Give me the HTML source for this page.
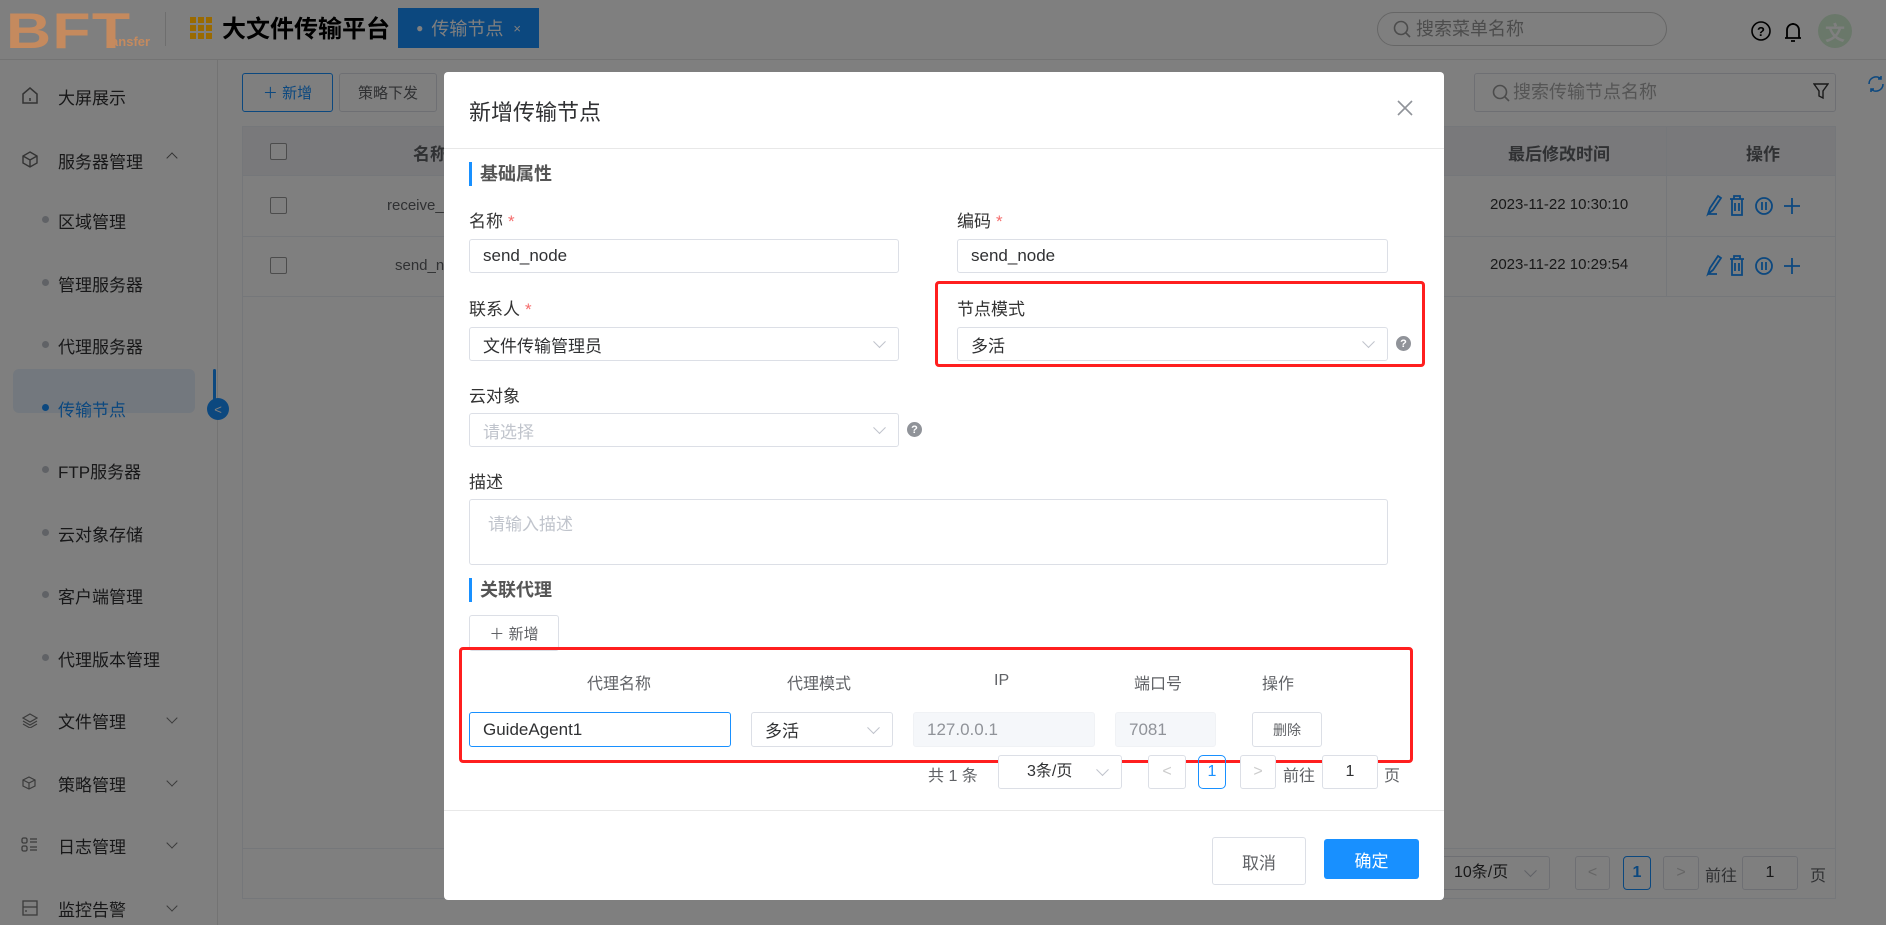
<!DOCTYPE html>
<html><head><meta charset="utf-8">
<style>
*{box-sizing:border-box;margin:0;padding:0}
html{width:1886px;height:925px;overflow:hidden}
body{width:1886px;height:925px;overflow:hidden;position:relative;background:#fff;font-family:"Liberation Sans","Noto Sans CJK SC",sans-serif;color:#303133}
.a{position:absolute;white-space:nowrap}
.c{display:flex;align-items:center;justify-content:center}
.side{font-size:17px;color:#303133}
.dot{width:7px;height:7px;border-radius:50%;background:#c0c4cc}
.btn{border:1px solid #dcdfe6;border-radius:3px;background:#fff}
.inp{border:1px solid #dcdfe6;border-radius:3px;background:#fff;font-size:17px;padding-left:13px;display:flex;align-items:center}
.lbl{font-size:17px;color:#333}
.star{color:#f56c6c;margin-left:5px}
.chev{position:absolute;right:14px;top:50%;width:9px;height:9px;border-right:1px solid #c0c4cc;border-bottom:1px solid #c0c4cc;transform:translateY(-75%) rotate(45deg)}
.help{width:15px;height:15px;border-radius:50%;background:#909399;color:#fff;font-size:11px;font-weight:bold}
.sec{border-left:3px solid #1890ff;padding-left:8px;font-size:18px;font-weight:bold;color:#555;height:24px;line-height:24px}
.th{font-size:16px;color:#606266}
</style></head><body>
<!-- header -->
<div class="a" style="left:0;top:0;width:1886px;height:60px;border-bottom:1px solid #e6e6e6;background:#fff"></div>
<div class="a" style="left:165px;top:12px;width:1px;height:34px;background:#ddd"></div>
<div class="a" style="left:222px;top:12px;font-size:24px;font-weight:bold;color:#000;line-height:36px">大文件传输平台</div>
<div class="a c" style="left:398px;top:8px;width:141px;height:40px;background:#1890ff;color:#fff;font-size:18px"><span style="font-size:12px;margin-right:8px">●</span>传输节点<span style="font-size:13px;margin-left:10px">×</span></div>
<div class="a" style="left:1377px;top:12px;width:290px;height:34px;border:1px solid #ccc;border-radius:17px;font-size:18px;color:#999;padding-left:38px;line-height:32px">搜索菜单名称</div>
<svg class="a" style="left:1393px;top:20px" width="18" height="18"><circle cx="8" cy="8" r="6.5" fill="none" stroke="#999" stroke-width="1.6"/><path d="M13 13l4 4" stroke="#999" stroke-width="1.6"/></svg>
<svg class="a" style="left:1751px;top:21px" width="20" height="20"><circle cx="10" cy="10" r="9" fill="none" stroke="#000" stroke-width="1.6"/><text x="10" y="15" font-size="13" text-anchor="middle" font-family="Liberation Sans" font-weight="bold">?</text></svg>
<svg class="a" style="left:1783px;top:20px" width="20" height="24"><path d="M4 18V10a6 6 0 0 1 12 0v8M2 18h16M10 3v1M8 21h4" fill="none" stroke="#000" stroke-width="1.8"/></svg>
<div class="a c" style="left:1818px;top:14px;width:34px;height:34px;border-radius:50%;background:#d4f0d4;color:#fff;font-size:20px;font-weight:bold">文</div>
<!-- sidebar -->
<div class="a" style="left:217px;top:60px;width:1px;height:865px;background:#e6e6e6"></div>
<div class="a side" style="left:0;top:0;width:217px;height:925px">
<svg class="a" style="left:20px;top:85px" width="20" height="20"><path d="M3 9l7-6 7 6v9H3z" fill="none" stroke="#666" stroke-width="1.5"/><path d="M10 13v3" stroke="#666" stroke-width="1.5"/></svg>
<div class="a" style="left:58px;top:84px">大屏展示</div>
<svg class="a" style="left:21px;top:150px" width="18" height="18"><path d="M9 2l7 4v7l-7 4-7-4V6zM2 6l7 4 7-4M9 10v7" fill="none" stroke="#666" stroke-width="1.4"/></svg>
<div class="a" style="left:58px;top:148px">服务器管理</div>
<div class="a" style="left:168px;top:154px;width:8px;height:8px;border-left:1px solid #666;border-top:1px solid #666;transform:rotate(45deg)"></div>
<div class="a" style="left:13px;top:369px;width:182px;height:44px;background:#e6f1fc;border-radius:6px"></div>
<div class="a" style="left:213px;top:369px;width:3px;height:32px;background:#1890ff;border-radius:2px"></div>
<div class="a c" style="left:207px;top:398px;width:22px;height:22px;border-radius:50%;background:#1890ff;color:#fff;font-size:13px">&lt;</div>
<div class="a dot" style="left:42px;top:216px"></div><div class="a" style="left:58px;top:208px">区域管理</div>
<div class="a dot" style="left:42px;top:279px"></div><div class="a" style="left:58px;top:271px">管理服务器</div>
<div class="a dot" style="left:42px;top:341px"></div><div class="a" style="left:58px;top:333px">代理服务器</div>
<div class="a dot" style="left:42px;top:404px;background:#1890ff"></div><div class="a" style="left:58px;top:396px;color:#1890ff">传输节点</div>
<div class="a dot" style="left:42px;top:466px"></div><div class="a" style="left:58px;top:458px">FTP服务器</div>
<div class="a dot" style="left:42px;top:529px"></div><div class="a" style="left:58px;top:521px">云对象存储</div>
<div class="a dot" style="left:42px;top:591px"></div><div class="a" style="left:58px;top:583px">客户端管理</div>
<div class="a dot" style="left:42px;top:654px"></div><div class="a" style="left:58px;top:646px">代理版本管理</div>
<div class="a" style="left:58px;top:708px">文件管理</div>
<div class="a" style="left:58px;top:771px">策略管理</div>
<div class="a" style="left:58px;top:833px">日志管理</div>
<div class="a" style="left:58px;top:896px">监控告警</div>
<svg class="a" style="left:22px;top:712px" width="16" height="16"><path d="M8 2l7 4-7 4-7-4zM1 9l7 4 7-4M1 12l7 4 7-4" fill="none" stroke="#777" stroke-width="1.2"/></svg>
<svg class="a" style="left:22px;top:775px" width="16" height="16"><path d="M7 2l6 3v6l-6 3-6-3V5zM1 5l6 3 6-3M7 8v6" fill="none" stroke="#777" stroke-width="1.2"/></svg>
<svg class="a" style="left:21px;top:837px" width="18" height="16"><rect x="1" y="1" width="5" height="5" rx="1.5" fill="none" stroke="#777" stroke-width="1.3"/><rect x="1" y="9" width="5" height="5" rx="1.5" fill="none" stroke="#777" stroke-width="1.3"/><path d="M9 2h7M9 5h7M9 10h7M9 13h7" stroke="#777" stroke-width="1.3"/></svg>
<svg class="a" style="left:22px;top:900px" width="16" height="16"><rect x="1" y="1" width="14" height="14" fill="none" stroke="#777" stroke-width="1.3"/><path d="M1 7h14M4 10v2" stroke="#777" stroke-width="1.3"/></svg>
<div class="a" style="left:168px;top:714px;width:8px;height:8px;border-right:1px solid #777;border-bottom:1px solid #777;transform:rotate(45deg)"></div>
<div class="a" style="left:168px;top:777px;width:8px;height:8px;border-right:1px solid #777;border-bottom:1px solid #777;transform:rotate(45deg)"></div>
<div class="a" style="left:168px;top:839px;width:8px;height:8px;border-right:1px solid #777;border-bottom:1px solid #777;transform:rotate(45deg)"></div>
<div class="a" style="left:168px;top:902px;width:8px;height:8px;border-right:1px solid #777;border-bottom:1px solid #777;transform:rotate(45deg)"></div>
</div>
<!-- content -->
<div class="a c" style="left:242px;top:73px;width:91px;height:39px;border:1px solid #1890ff;border-radius:3px;color:#1890ff;font-size:15px">＋ 新增</div>
<div class="a c btn" style="left:339px;top:73px;width:98px;height:39px;font-size:15px;color:#606266">策略下发</div>
<div class="a" style="left:1474px;top:73px;width:362px;height:39px;border:1px solid #dcdfe6;border-radius:3px;font-size:18px;color:#aaa;padding-left:38px;line-height:37px">搜索传输节点名称</div>
<svg class="a" style="left:1492px;top:84px" width="18" height="18"><circle cx="8" cy="8" r="6.5" fill="none" stroke="#999" stroke-width="1.6"/><path d="M13 13l4 4" stroke="#999" stroke-width="1.6"/></svg>
<svg class="a" style="left:1813px;top:82px" width="16" height="18"><path d="M1 2h14l-5 7v7l-4-2V9z" fill="none" stroke="#333" stroke-width="1.4"/></svg>
<svg class="a" style="left:1866px;top:74px" width="20" height="20"><path d="M3 10a7 7 0 0 1 12-5M17 10a7 7 0 0 1-12 5M15 2v3h-3M5 18v-3h3" fill="none" stroke="#1890ff" stroke-width="1.6"/></svg>
<div class="a" style="left:242px;top:126px;width:1594px;height:773px;border:1px solid #ebeef5"></div>
<div class="a" style="left:243px;top:127px;width:1592px;height:49px;background:#f2f3f7;border-bottom:1px solid #ebeef5"></div>
<div class="a" style="left:1666px;top:127px;width:1px;height:170px;background:#ebeef5"></div>
<div class="a" style="left:243px;top:236px;width:1592px;height:1px;background:#ebeef5"></div>
<div class="a" style="left:243px;top:296px;width:1592px;height:1px;background:#ebeef5"></div>
<div class="a" style="left:243px;top:848px;width:1592px;height:1px;background:#ebeef5"></div>
<div class="a" style="left:270px;top:143px;width:17px;height:17px;border:1px solid #999;border-radius:2px;background:#fff"></div>
<div class="a" style="left:270px;top:197px;width:17px;height:17px;border:1px solid #999;border-radius:2px;background:#fff"></div>
<div class="a" style="left:270px;top:257px;width:17px;height:17px;border:1px solid #999;border-radius:2px;background:#fff"></div>
<div class="a th" style="left:413px;top:140px;font-weight:bold;font-size:17px">名称</div>
<div class="a" style="left:387px;top:197px;font-size:15px;color:#606266">receive_node</div>
<div class="a" style="left:395px;top:257px;font-size:15px;color:#606266">send_node</div>
<div class="a" style="left:1508px;top:140px;font-size:17px;font-weight:bold;color:#606266">最后修改时间</div>
<div class="a" style="left:1746px;top:140px;font-size:17px;font-weight:bold;color:#606266">操作</div>
<div class="a" style="left:1490px;top:196px;font-size:15px;color:#333">2023-11-22 10:30:10</div>
<div class="a" style="left:1490px;top:256px;font-size:15px;color:#333">2023-11-22 10:29:54</div>
<svg class="a" style="left:1700px;top:190px" width="110" height="90"><g fill="none" stroke="#1890ff" stroke-width="1.8"><path d="M8 24l2-6 8-12 3 2-8 12zM8 24h9"/><path d="M30 9h14M34 9V6h6v3M32 9v16h10V9M35 13v8M39 13v8"/><circle cx="64" cy="16" r="8"/><path d="M62 12v8M66 12v8"/><path d="M92 8v16M84 16h16"/></g><g transform="translate(0,60)" fill="none" stroke="#1890ff" stroke-width="1.8"><path d="M8 24l2-6 8-12 3 2-8 12zM8 24h9"/><path d="M30 9h14M34 9V6h6v3M32 9v16h10V9M35 13v8M39 13v8"/><circle cx="64" cy="16" r="8"/><path d="M62 12v8M66 12v8"/><path d="M92 8v16M84 16h16"/></g></svg>
<div class="a btn" style="left:1441px;top:856px;width:109px;height:34px;font-size:16px;line-height:32px;padding-left:12px">10条/页<span class="chev"></span></div>
<div class="a c btn" style="left:1575px;top:856px;width:35px;height:34px;color:#ccc">&lt;</div>
<div class="a c" style="left:1623px;top:856px;width:28px;height:34px;border:1px solid #1890ff;border-radius:4px;color:#1890ff;font-weight:bold;font-size:16px">1</div>
<div class="a c btn" style="left:1663px;top:856px;width:36px;height:34px;color:#ccc">&gt;</div>
<div class="a" style="left:1705px;top:862px;font-size:16px;color:#606266">前往</div>
<div class="a c btn" style="left:1742px;top:856px;width:56px;height:34px;font-size:16px">1</div>
<div class="a" style="left:1810px;top:862px;font-size:16px;color:#606266">页</div>
<!-- overlay -->
<div class="a" style="left:0;top:0;width:1886px;height:925px;background:rgba(0,0,0,0.5)"></div>
<div class="a" style="left:6px;top:9px;font-size:50px;font-weight:900;color:#c58a5e;letter-spacing:1px;line-height:44px;font-family:'Liberation Sans',sans-serif;transform:scaleX(1.25);transform-origin:left">BFT</div>
<div class="a" style="left:106px;top:34px;font-size:13px;font-weight:bold;color:#c58a5e">ransfer</div>
<svg class="a" style="left:190px;top:17px" width="22" height="22"><g fill="#9a6a00"><rect x="0" y="0" width="6" height="6"/><rect x="8" y="0" width="6" height="6"/><rect x="16" y="0" width="6" height="6"/><rect x="0" y="8" width="6" height="6"/><rect x="8" y="8" width="6" height="6"/><rect x="16" y="8" width="6" height="6"/><rect x="0" y="16" width="6" height="6"/><rect x="8" y="16" width="6" height="6"/><rect x="16" y="16" width="6" height="6"/></g></svg>
<!-- modal -->
<div class="a" style="left:444px;top:72px;width:1000px;height:828px;background:#fff;border-radius:4px"></div>
<div class="a" style="left:469px;top:95px;font-size:22px;color:#303133">新增传输节点</div>
<svg class="a" style="left:1396px;top:99px" width="18" height="18"><path d="M2 2l14 14M16 2L2 16" stroke="#909399" stroke-width="1.6"/></svg>
<div class="a" style="left:444px;top:148px;width:1000px;height:1px;background:#e8e8e8"></div>
<div class="a sec" style="left:469px;top:162px">基础属性</div>
<div class="a lbl" style="left:469px;top:207px">名称<span class="star">*</span></div>
<div class="a lbl" style="left:957px;top:207px">编码<span class="star">*</span></div>
<div class="a inp" style="left:469px;top:239px;width:430px;height:34px">send_node</div>
<div class="a inp" style="left:957px;top:239px;width:431px;height:34px">send_node</div>
<div class="a lbl" style="left:469px;top:295px">联系人<span class="star">*</span></div>
<div class="a lbl" style="left:957px;top:295px">节点模式</div>
<div class="a inp" style="left:469px;top:327px;width:430px;height:34px">文件传输管理员<span class="chev"></span></div>
<div class="a inp" style="left:957px;top:327px;width:431px;height:34px">多活<span class="chev"></span></div>
<div class="a c help" style="left:1396px;top:336px">?</div>
<div class="a" style="left:935px;top:281px;width:490px;height:86px;border:3px solid #ff1f1f;border-radius:4px"></div>
<div class="a lbl" style="left:469px;top:382px">云对象</div>
<div class="a inp" style="left:469px;top:413px;width:430px;height:34px;color:#c0c4cc">请选择<span class="chev"></span></div>
<div class="a c help" style="left:907px;top:422px">?</div>
<div class="a lbl" style="left:469px;top:468px">描述</div>
<div class="a inp" style="left:469px;top:499px;width:919px;height:66px;align-items:flex-start;padding-top:10px;padding-left:18px;color:#c0c4cc">请输入描述</div>
<div class="a sec" style="left:469px;top:578px">关联代理</div>
<div class="a c btn" style="left:469px;top:615px;width:90px;height:36px;font-size:15px;color:#606266">＋ 新增</div>
<div class="a th" style="left:587px;top:670px">代理名称</div>
<div class="a th" style="left:787px;top:670px">代理模式</div>
<div class="a th" style="left:994px;top:670px;line-height:22px">IP</div>
<div class="a th" style="left:1134px;top:670px">端口号</div>
<div class="a th" style="left:1262px;top:670px">操作</div>
<div class="a inp" style="left:469px;top:712px;width:262px;height:35px;border-color:#1890ff">GuideAgent1</div>
<div class="a inp" style="left:751px;top:712px;width:142px;height:35px">多活<span class="chev"></span></div>
<div class="a inp" style="left:913px;top:712px;width:182px;height:35px;background:#f5f7fa;border-color:#f0f2f5;color:#909399">127.0.0.1</div>
<div class="a inp" style="left:1115px;top:712px;width:101px;height:35px;background:#f5f7fa;border-color:#f0f2f5;color:#909399">7081</div>
<div class="a c btn" style="left:1252px;top:712px;width:70px;height:35px;font-size:14px;color:#606266">删除</div>
<div class="a" style="left:459px;top:647px;width:954px;height:116px;border:3px solid #ff1f1f;border-radius:4px"></div>
<div class="a" style="left:928px;top:762px;font-size:16px;color:#606266">共 1 条</div>
<div class="a btn" style="left:998px;top:755px;width:124px;height:34px;font-size:16px;line-height:32px;padding-left:28px">3条/页<span class="chev"></span></div>
<div class="a c btn" style="left:1148px;top:755px;width:38px;height:34px;color:#ccc">&lt;</div>
<div class="a c" style="left:1198px;top:755px;width:28px;height:34px;border:1px solid #1890ff;border-radius:5px;color:#1890ff;font-size:16px">1</div>
<div class="a c btn" style="left:1240px;top:755px;width:36px;height:34px;color:#ccc">&gt;</div>
<div class="a" style="left:1283px;top:762px;font-size:16px;color:#606266">前往</div>
<div class="a c btn" style="left:1322px;top:755px;width:56px;height:34px;font-size:16px">1</div>
<div class="a" style="left:1384px;top:762px;font-size:16px;color:#606266">页</div>
<div class="a" style="left:444px;top:810px;width:1000px;height:1px;background:#e8e8e8"></div>
<div class="a c btn" style="left:1212px;top:837px;width:94px;height:48px;font-size:17px;color:#606266">取消</div>
<div class="a c" style="left:1324px;top:839px;width:95px;height:40px;background:#1890ff;border-radius:3px;color:#fff;font-size:17px">确定</div>
</body></html>
